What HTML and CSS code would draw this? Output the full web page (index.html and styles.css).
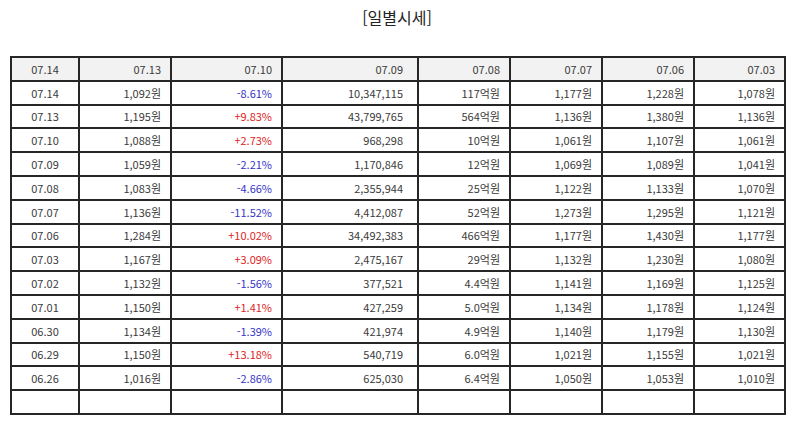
FILE: index.html
```html
<!DOCTYPE html>
<html lang="ko">
<head>
<meta charset="utf-8">
<title>일별시세</title>
<link rel="stylesheet" href="styles.css">
</head>
<body>
<h1 class="title">[일별시세]</h1>
<table class="grid">
<colgroup>
<col class="c1"><col class="c2"><col class="c3"><col class="c4"><col class="c5"><col class="c6"><col class="c7"><col class="c8">
</colgroup>
<thead>
<tr><th class="ctr">07.14</th><th>07.13</th><th>07.10</th><th class="wide">07.09</th><th>07.08</th><th>07.07</th><th>07.06</th><th>07.03</th></tr>
</thead>
<tbody>
<tr><td class="ctr">07.14</td><td>1,092원</td><td class="dn">-8.61%</td><td class="wide">10,347,115</td><td>117억원</td><td>1,177원</td><td>1,228원</td><td>1,078원</td></tr>
<tr><td class="ctr">07.13</td><td>1,195원</td><td class="up">+9.83%</td><td class="wide">43,799,765</td><td>564억원</td><td>1,136원</td><td>1,380원</td><td>1,136원</td></tr>
<tr><td class="ctr">07.10</td><td>1,088원</td><td class="up">+2.73%</td><td class="wide">968,298</td><td>10억원</td><td>1,061원</td><td>1,107원</td><td>1,061원</td></tr>
<tr><td class="ctr">07.09</td><td>1,059원</td><td class="dn">-2.21%</td><td class="wide">1,170,846</td><td>12억원</td><td>1,069원</td><td>1,089원</td><td>1,041원</td></tr>
<tr><td class="ctr">07.08</td><td>1,083원</td><td class="dn">-4.66%</td><td class="wide">2,355,944</td><td>25억원</td><td>1,122원</td><td>1,133원</td><td>1,070원</td></tr>
<tr><td class="ctr">07.07</td><td>1,136원</td><td class="dn">-11.52%</td><td class="wide">4,412,087</td><td>52억원</td><td>1,273원</td><td>1,295원</td><td>1,121원</td></tr>
<tr><td class="ctr">07.06</td><td>1,284원</td><td class="up">+10.02%</td><td class="wide">34,492,383</td><td>466억원</td><td>1,177원</td><td>1,430원</td><td>1,177원</td></tr>
<tr><td class="ctr">07.03</td><td>1,167원</td><td class="up">+3.09%</td><td class="wide">2,475,167</td><td>29억원</td><td>1,132원</td><td>1,230원</td><td>1,080원</td></tr>
<tr><td class="ctr">07.02</td><td>1,132원</td><td class="dn">-1.56%</td><td class="wide">377,521</td><td>4.4억원</td><td>1,141원</td><td>1,169원</td><td>1,125원</td></tr>
<tr><td class="ctr">07.01</td><td>1,150원</td><td class="up">+1.41%</td><td class="wide">427,259</td><td>5.0억원</td><td>1,134원</td><td>1,178원</td><td>1,124원</td></tr>
<tr><td class="ctr">06.30</td><td>1,134원</td><td class="dn">-1.39%</td><td class="wide">421,974</td><td>4.9억원</td><td>1,140원</td><td>1,179원</td><td>1,130원</td></tr>
<tr><td class="ctr">06.29</td><td>1,150원</td><td class="up">+13.18%</td><td class="wide">540,719</td><td>6.0억원</td><td>1,021원</td><td>1,155원</td><td>1,021원</td></tr>
<tr><td class="ctr">06.26</td><td>1,016원</td><td class="dn">-2.86%</td><td class="wide">625,030</td><td>6.4억원</td><td>1,050원</td><td>1,053원</td><td>1,010원</td></tr>
<tr class="empty"><td></td><td></td><td></td><td></td><td></td><td></td><td></td><td></td></tr>
</tbody>
</table>
</body>
</html>
```

FILE: styles.css
```css
html, body {
  margin: 0;
  padding: 0;
  background: #ffffff;
}
body {
  font-family: "Noto Sans CJK KR", "Noto Sans", sans-serif;
  color: #333333;
}
.title {
  margin: 0;
  padding-top: 5px;
  height: 56px;
  box-sizing: border-box;
  text-align: center;
  font-size: 16px;
  font-weight: 400;
  line-height: 24px;
  color: #222222;
}
.grid {
  margin-left: 10px;
  width: 774px;
  border-collapse: collapse;
  table-layout: fixed;
  font-size: 11px;
}
.c1 { width: 68px; }
.c2 { width: 92px; }
.c3 { width: 111px; }
.c4 { width: 136px; }
.c5 { width: 92px; }
.c6 { width: 92px; }
.c7 { width: 92px; }
.c8 { width: 91px; }
.grid th, .grid td {
  border: 2px solid #262626;
  height: 21.8px;
  padding: 0 9px 0 4px;
  text-align: right;
  font-weight: 400;
  line-height: 14px;
  white-space: nowrap;
  color: #3a3a3a;
}
.grid th {
  background: #f2f2f2;
}
.grid .wide {
  padding-right: 14px;
}
.grid .ctr {
  text-align: center;
  padding: 0;
}
.grid .up { color: #e02424; }
.grid .dn { color: #3535c8; }
```
